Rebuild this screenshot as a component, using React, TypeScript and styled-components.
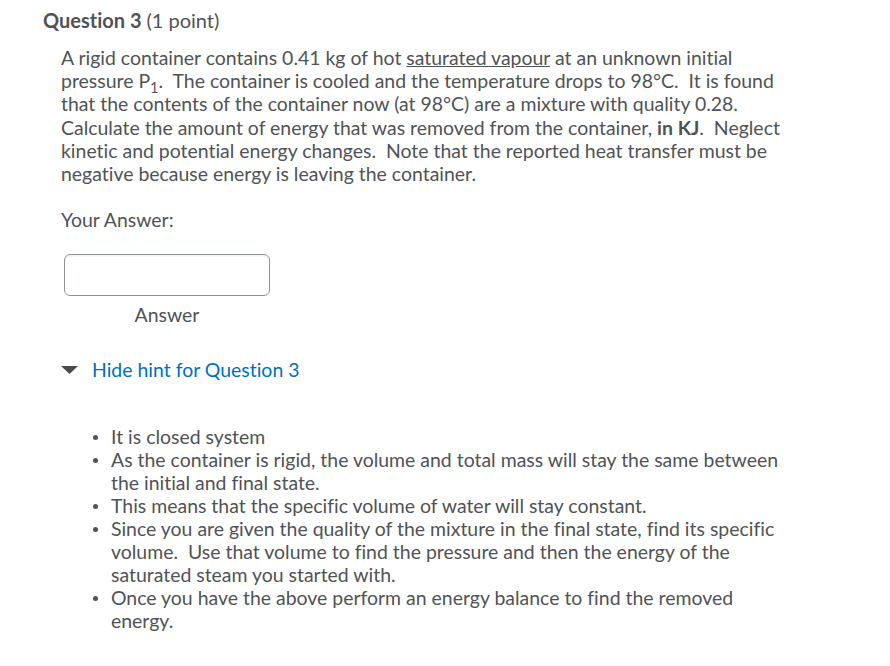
import React from "react";
import styled, { createGlobalStyle } from "styled-components";

const Global = createGlobalStyle`
  html, body { margin: 0; padding: 0; background: #ffffff; }
  body {
    font-family: Lato, "Open Sans", sans-serif;
    color: #505356;
    font-variant-ligatures: no-common-ligatures;
  }
`;

const Page = styled.div`
  padding: 8px 0 0 43px;
  width: 820px;
`;

const Heading = styled.h2`
  margin: 0;
  font-size: 20px;
  line-height: 24px;
  font-weight: 700;
  color: #505356;
`;

const Points = styled.span`
  font-weight: 400;
`;

const Body = styled.div`
  padding-left: 18px;
  margin-top: 14px;
`;

const Para = styled.p`
  margin: 0;
  font-size: 19.45px;
  line-height: 23.2px;
  white-space: nowrap;
`;

const Sub = styled.sub`
  font-size: 0.75em;
  line-height: 0;
`;

const U = styled.span`
  text-decoration: underline;
`;

const Label = styled.div`
  margin-top: 23px;
  font-size: 19.45px;
  line-height: 23px;
`;

const AnswerBlock = styled.div`
  margin-top: 23px;
  margin-left: 3px;
  width: 206px;
  display: flex;
  flex-direction: column;
  align-items: center;
`;

const Input = styled.div`
  width: 206px;
  height: 42px;
  box-sizing: border-box;
  border: 1px solid #8e9396;
  border-radius: 6px;
  background: #fff;
  box-shadow: inset 0 2px 0 #f4f5f6;
`;

const Caption = styled.div`
  margin-top: 7px;
  font-size: 19.45px;
  line-height: 23px;
`;

const HintToggle = styled.div`
  margin-top: 32px;
  display: flex;
  align-items: center;
  gap: 14px;
  font-size: 19.45px;
  line-height: 23px;
`;

const HintLink = styled.span`
  color: #006fbf;
`;

const List = styled.ul`
  margin: 44px 0 0 0;
  padding-left: 68px;
  font-size: 19.45px;
  line-height: 23px;
  list-style: none;
  white-space: nowrap;
`;

const Item = styled.li`
  position: relative;
  &::before {
    content: "";
    position: absolute;
    left: -18px;
    top: 10px;
    width: 5px;
    height: 5px;
    border-radius: 50%;
    background: #505356;
  }
`;

export default function App() {
  return (
    <>
      <Global />
      <Page>
        <Heading>
          Question 3 <Points>(1 point)</Points>
        </Heading>
        <Body>
          <Para>
            A rigid container contains 0.41 kg of hot <U>saturated vapour</U> at an unknown initial
            <br />
            pressure P<Sub>1</Sub>.&nbsp; The container is cooled and the temperature drops to 98°C.&nbsp; It is found
            <br />
            that the contents of the container now (at 98°C) are a mixture with quality 0.28.
            <br />
            Calculate the amount of energy that was removed from the container, <b>in KJ</b>.&nbsp; Neglect
            <br />
            kinetic and potential energy changes.&nbsp; Note that the reported heat transfer must be
            <br />
            negative because energy is leaving the container.
          </Para>
          <Label>Your Answer:</Label>
          <AnswerBlock>
            <Input />
            <Caption>Answer</Caption>
          </AnswerBlock>
          <HintToggle>
            <svg width="17" height="8" viewBox="0 0 17 8">
              <polygon points="0,0 17,0 8.5,8" fill="#494c4e" />
            </svg>
            <HintLink>Hide hint for Question 3</HintLink>
          </HintToggle>
        </Body>
        <List>
          <Item>It is closed system</Item>
          <Item>
            As the container is rigid, the volume and total mass will stay the same between
            <br />
            the initial and final state.
          </Item>
          <Item>This means that the specific volume of water will stay constant.</Item>
          <Item>
            Since you are given the quality of the mixture in the final state, find its specific
            <br />
            volume.&nbsp; Use that volume to find the pressure and then the energy of the
            <br />
            saturated steam you started with.
          </Item>
          <Item>
            Once you have the above perform an energy balance to find the removed
            <br />
            energy.
          </Item>
        </List>
      </Page>
    </>
  );
}
